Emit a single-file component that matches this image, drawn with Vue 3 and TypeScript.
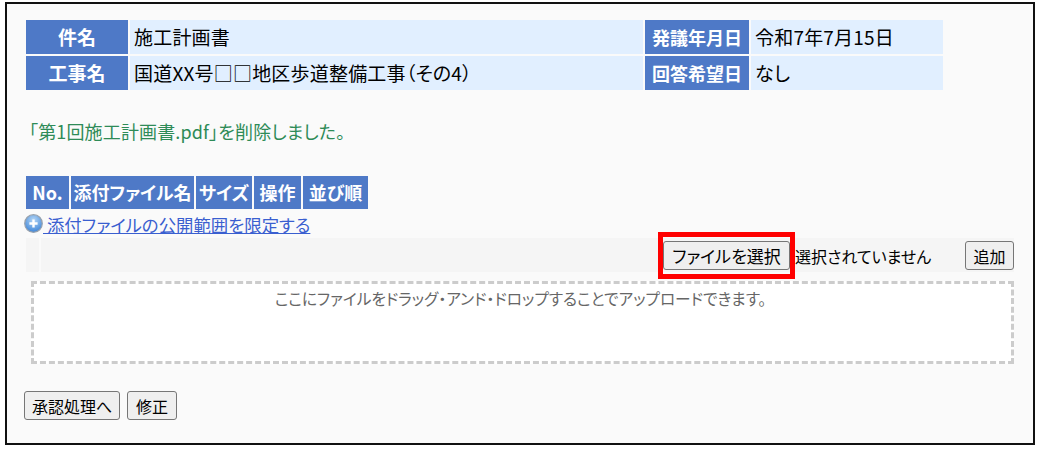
<script setup lang="ts">
import { ref } from 'vue';

const infoRows = [
  { label: '件名', value: '施工計画書', dateLabel: '発議年月日', dateValue: '令和7年7月15日' },
  { label: '工事名', value: '国道XX号□□地区歩道整備工事（その4）', dateLabel: '回答希望日', dateValue: 'なし' },
];

const columns = [
  { name: 'No.', width: 43 },
  { name: '添付ファイル名', width: 123 },
  { name: 'サイズ', width: 56 },
  { name: '操作', width: 47 },
  { name: '並び順', width: 65 },
];

const message = ref('「第1回施工計画書.pdf」を削除しました。');
</script>

<template>
  <div class="frame">
    <table class="info">
      <tr v-for="row in infoRows" :key="row.label">
        <th class="c-label">{{ row.label }}</th>
        <td class="c-value">{{ row.value }}</td>
        <th class="c-date-label">{{ row.dateLabel }}</th>
        <td class="c-date">{{ row.dateValue }}</td>
      </tr>
    </table>

    <p class="message">{{ message }}</p>

    <table class="files">
      <tr>
        <th v-for="col in columns" :key="col.name" :style="{ width: col.width + 'px' }">{{ col.name }}</th>
      </tr>
    </table>

    <div class="limit">
      <svg class="plus" width="19" height="19" viewBox="0 0 19 19">
        <defs>
          <radialGradient id="plusFill" cx="50%" cy="30%" r="70%">
            <stop offset="0" stop-color="#b4d6f6" />
            <stop offset="1" stop-color="#3f86d8" />
          </radialGradient>
        </defs>
        <circle cx="9.5" cy="9.5" r="8.8" fill="url(#plusFill)" stroke="#98a2ae" stroke-width="1.2" />
        <path d="M9.5 5.4v8.2M5.4 9.5h8.2" stroke="#fff" stroke-width="2.4" />
      </svg>
      <a href="#" class="limit-link">&nbsp;添付ファイルの公開範囲を限定する</a>
    </div>

    <div class="upload-bar">
      <div class="bar-head"></div>
      <div class="bar-body">
        <span class="file-wrap"><button type="button" class="btn file-btn">ファイルを選択</button></span>
        <span class="no-file">選択されていません</span>
        <button type="button" class="btn add-btn">追加</button>
      </div>
    </div>

    <div class="dropzone">ここにファイルをドラッグ・アンド・ドロップすることでアップロードできます。</div>

    <div class="actions">
      <button type="button" class="btn">承認処理へ</button>
      <button type="button" class="btn">修正</button>
    </div>
  </div>
</template>

<style>
body {
  background: #fff;
}
</style>

<style scoped>
.frame {
  box-sizing: border-box;
  width: 1030px;
  height: 443px;
  margin: 2px 0 0 5px;
  padding: 14px 19px 0 17px;
  border: 2px solid #111;
  background: #fafafa;
  font-family: "Noto Sans CJK JP", sans-serif;
  font-feature-settings: "palt";
  color: #000;
}

table {
  border-collapse: separate;
  border-spacing: 2px;
  table-layout: fixed;
}

th {
  padding: 0;
  background: #4e79c7;
  color: #fff;
  font-weight: 700;
  text-align: center;
}

.info {
  width: 921px;
  font-size: 19px;
}

.info th,
.info td {
  height: 34px;
  line-height: 32px;
  white-space: nowrap;
}

.info .c-date-label {
  font-size: 18px;
}

.info td {
  padding: 0 0 0 4px;
  background: #e1efff;
  line-height: 34px;
  letter-spacing: 0.2px;
}

.c-label {
  width: 102px;
}

.c-value {
  width: 509px;
}

.c-date-label {
  width: 104px;
}

.c-date {
  width: 188px;
}

.message {
  margin: 26px 0 0 5px;
  height: 26px;
  line-height: 26px;
  font-size: 18px;
  letter-spacing: 0.15px;
  color: #2e8b57;
}

.files {
  margin-top: 30px;
  font-size: 18px;
}

.files th {
  height: 33px;
  line-height: 31px;
  white-space: nowrap;
}

.limit {
  display: flex;
  align-items: center;
  height: 20px;
  margin-top: 2px;
}

.plus {
  flex: none;
}

.limit-link {
  margin-top: 3px;
  font-size: 17.4px;
  line-height: 20px;
  color: #3a5fd0;
  text-decoration: underline;
  white-space: nowrap;
}

.upload-bar {
  display: flex;
  gap: 2px;
  height: 34px;
  margin: 5px 0 0 2px;
}

.bar-head {
  width: 13px;
  background: #f5f5f5;
}

.bar-body {
  flex: 1;
  display: flex;
  align-items: center;
  padding-top: 1px;
  background: #f5f5f5;
}

.btn {
  box-sizing: border-box;
  height: 29px;
  padding: 0;
  border: 1px solid #767676;
  border-radius: 3px;
  background: #efefef;
  color: #000;
  font-family: inherit;
  font-feature-settings: inherit;
  font-size: 16px;
  white-space: nowrap;
}

.file-wrap {
  position: relative;
  display: block;
  margin-left: 622px;
}

.file-btn {
  display: block;
  width: 127px;
  font-size: 17px;
}

/* 赤枠の注釈 */
.file-wrap::after {
  content: '';
  position: absolute;
  top: -9px;
  right: -5px;
  bottom: -9px;
  left: -5px;
  border: 5px solid #ff0000;
  pointer-events: none;
}

.no-file {
  margin-left: 5px;
  font-size: 16px;
}

.add-btn {
  width: 49px;
  margin-left: auto;
}

.dropzone {
  box-sizing: border-box;
  height: 83px;
  margin: 9px 0 0 7px;
  padding: 4px 4px 0 0;
  border: 3px dashed #ccc;
  background: #fff;
  color: #666;
  font-size: 15.7px;
  line-height: 22px;
  text-align: center;
}

.actions {
  display: flex;
  gap: 7px;
  margin-top: 27px;
}

.actions .btn:first-child {
  width: 96px;
}

.actions .btn:last-child {
  width: 50px;
}
</style>
